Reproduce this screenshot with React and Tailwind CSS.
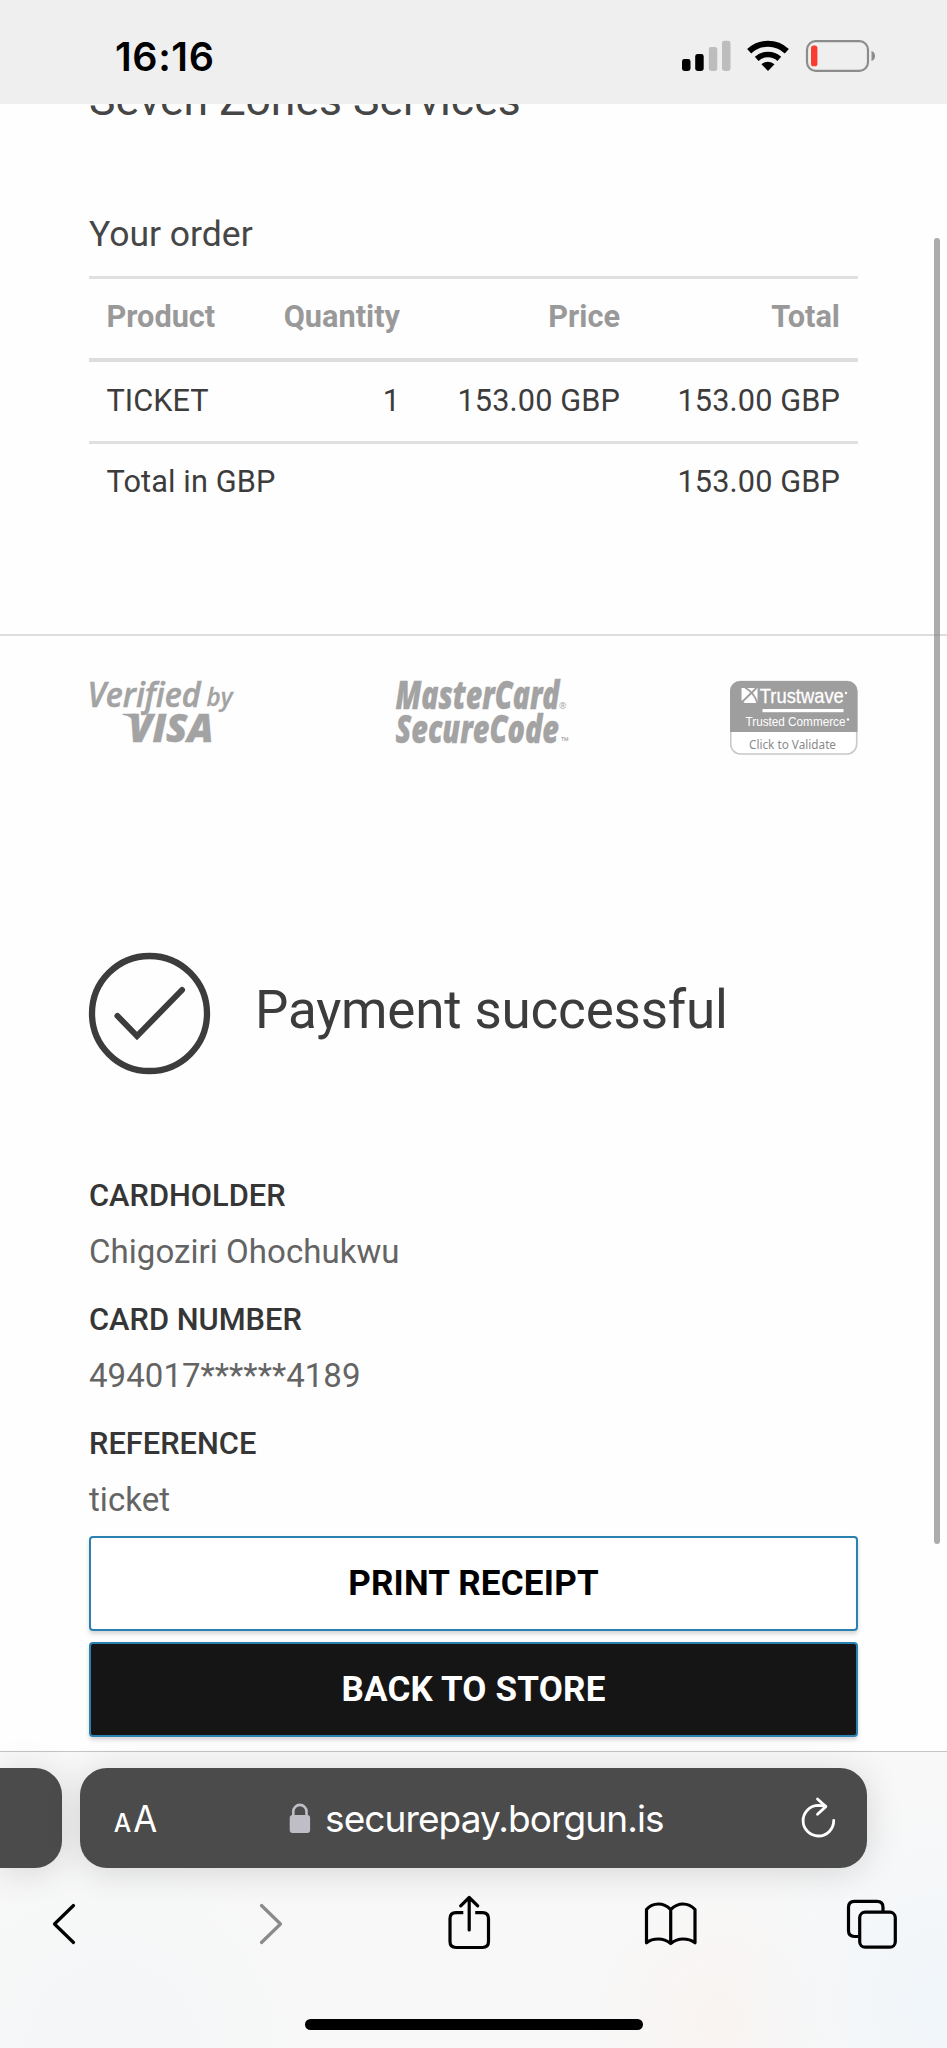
function StatusBar() {
  return (
    <header className="flex h-[104px] shrink-0 items-start justify-between bg-[#efefef] pl-[115px] pr-[70px]">
      <span className="mt-[33px] font-['Inter'] text-[39.5px] font-semibold leading-[48px] tracking-[0.6px] text-black">16:16</span>
      <svg className="mt-[36px]" width="195" height="40" viewBox="682 36 195 40">
        <rect x="682" y="59" width="8.5" height="12" rx="2.4" fill="#000" />
        <rect x="695.2" y="54" width="8.5" height="17" rx="2.4" fill="#000" />
        <rect x="708.8" y="47" width="8.5" height="24" rx="2.4" fill="#bdbdbd" />
        <rect x="722" y="40.7" width="8.5" height="30.3" rx="2.4" fill="#bdbdbd" />
        <path d="M749.2 51.2A27.5 27.5 0 0 1 786.8 51.2" fill="none" stroke="#000" strokeWidth="6" />
        <path d="M756.7 58.8A17 17 0 0 1 779.3 58.8" fill="none" stroke="#000" strokeWidth="5.6" />
        <path d="M761.5 64.3A9.6 9.6 0 0 1 774.5 64.3L768 71Z" fill="#000" />
        <rect x="807" y="41.2" width="61" height="29.6" rx="8.5" fill="none" stroke="#8c8c8c" strokeWidth="2.2" />
        <rect x="811" y="45.5" width="6.4" height="20.8" rx="2.6" fill="#fb3c30" />
        <path d="M871.5 51C876.3 52.5 876.3 59.5 871.5 61Z" fill="#8c8c8c" />
      </svg>
    </header>
  );
}

function OrderTable() {
  return (
    <div className="border-t-[3px] border-[#e0e0e0] text-[30.7px] leading-[36px] text-[#3c3c3c]">
      <div className="flex h-[83px] items-center border-b-4 border-[#dddddd] pb-[3px] font-bold text-[#999999]">
        <span className="w-[160px] pl-[17.5px]">Product</span>
        <span className="w-[151px] text-right">Quantity</span>
        <span className="w-[220px] text-right">Price</span>
        <span className="w-[220px] text-right">Total</span>
      </div>
      <div className="flex h-[82px] items-center border-b-[3px] border-[#e0e0e0] pb-[1px]">
        <span className="w-[160px] pl-[17.5px]">TICKET</span>
        <span className="w-[151px] text-right">1</span>
        <span className="w-[220px] text-right tracking-[0.12px]">153.00 GBP</span>
        <span className="w-[220px] text-right tracking-[0.12px]">153.00 GBP</span>
      </div>
      <div className="flex h-[76px] items-center justify-between pl-[17.5px] pr-[18px] tracking-[0.12px]">
        <span>Total in GBP</span>
        <span>153.00 GBP</span>
      </div>
    </div>
  );
}

function VerifiedByVisa() {
  return (
    <svg width="146" height="76" viewBox="89 680 146 76" className="overflow-visible font-['Open_Sans'] italic" fill="#a3a3a3" stroke="#a3a3a3">
      <text x="87.5" y="706.7" fontSize="34.5" fontWeight="600" strokeWidth="0.6" textLength="113" lengthAdjust="spacingAndGlyphs">Verified</text>
      <text x="206.5" y="706.3" fontSize="25" fontWeight="600" strokeWidth="0.3" textLength="26" lengthAdjust="spacingAndGlyphs">by</text>
      <text x="128.5" y="742" fontSize="39.5" fontWeight="800" strokeWidth="0.5" textLength="85" lengthAdjust="spacingAndGlyphs">VISA</text>
      <path stroke="none" d="M122.5 713.7H136L136 726Q133.500 716.5 122.5 714.8Z" />
    </svg>
  );
}

function SecureCode() {
  return (
    <svg width="178" height="76" viewBox="395 680 178 76" className="overflow-visible font-['Open_Sans'] italic" fill="#a3a3a3" stroke="#a3a3a3">
      <text x="396.5" y="708.5" fontSize="38.5" fontWeight="800" strokeWidth="0.4" textLength="164" lengthAdjust="spacingAndGlyphs">MasterCard</text>
      <text x="560" y="709" fontSize="9" stroke="none" className="not-italic">®</text>
      <text x="396.5" y="743" fontSize="38.5" fontWeight="800" strokeWidth="0.4" textLength="163.5" lengthAdjust="spacingAndGlyphs">SecureCode</text>
      <text x="562" y="745" fontSize="10.5" stroke="none" className="not-italic">™</text>
    </svg>
  );
}

function Trustwave() {
  return (
    <svg width="128" height="76" viewBox="730.5 680 128 76" className="font-['Liberation_Sans']">
      <rect x="731.2" y="681.5" width="126" height="72.5" rx="10" fill="#fff" stroke="#c8c8c8" strokeWidth="1.6" />
      <path d="M730.5 732V691a10 10 0 0 1 10-10H848a10 10 0 0 1 10 10V732Z" fill="#9e9e9e" />
      <path d="M742 688H758V703H742Z" fill="#fff" />
      <path d="M742 702.5L757 688M745.5 687.5Q755 693 758 703.5" stroke="#9e9e9e" strokeWidth="1.8" fill="none" />
      <path d="M741.5 703.5V700L746 703.5Z" fill="#9e9e9e" />
      <text x="760.3" y="703" fontSize="21" fill="#fff" stroke="#fff" strokeWidth="0.3" textLength="84" lengthAdjust="spacingAndGlyphs">Trustwave</text>
      <circle cx="846.5" cy="693" r="1.2" fill="#fff" />
      <rect x="763" y="709" width="81" height="3.2" fill="#fff" />
      <text x="746" y="725.5" fontSize="13" fill="#fff" textLength="100" lengthAdjust="spacingAndGlyphs">Trusted Commerce</text>
      <circle cx="848.5" cy="719.5" r="1.2" fill="#fff" />
      <text x="749.5" y="748.5" fontSize="12.5" fill="#8a8a8a" className="font-['Noto_Sans']" textLength="87" lengthAdjust="spacingAndGlyphs">Click to Validate</text>
    </svg>
  );
}

function Detail({ label, value }) {
  return (
    <div className="h-[124px]">
      <dt className="h-[57px] text-[30.8px] font-medium leading-[36px] text-[#363636]">{label}</dt>
      <dd className="-mt-[1px] text-[33px] leading-[36px] tracking-[0.05px] text-[#646464]">{value}</dd>
    </div>
  );
}

function BrowserBar() {
  return (
    <footer className="flex grow flex-col border-t border-[#c4c4c4] bg-[#f8f8f8] bg-[radial-gradient(circle_at_100%_85%,#f1f6fa_0%,#f8f8f800_22%),radial-gradient(circle_at_76%_90%,#f9f4f2_0%,#f8f8f800_18%),radial-gradient(circle_at_12%_100%,#f4f6f7_0%,#f8f8f800_25%)]">
      <div className="flex h-[116px] items-end gap-[18px] font-['Inter'] text-white">
        <div className="h-[100px] w-[62px] rounded-r-[27px] bg-[#4b4b4b] shadow-[0_4px_36px_rgba(0,0,0,0.14)]" />
        <div className="flex h-[100px] w-[787px] items-center rounded-[27px] bg-[#4b4b4b] pl-[34px] pr-[29px] shadow-[0_4px_36px_rgba(0,0,0,0.14)]">
          <svg className="mr-[129px] overflow-visible" width="46" height="40" viewBox="114 1798 46 40" fill="#fff">
            <text x="113.8" y="1832.3" fontSize="25.5" fontWeight="500" textLength="17.5" lengthAdjust="spacingAndGlyphs">A</text>
            <text x="133.3" y="1832.3" fontSize="36.5" textLength="24" lengthAdjust="spacingAndGlyphs">A</text>
          </svg>
          <svg className="mr-[14px]" width="22" height="32" viewBox="289 1802 22 32">
            <rect x="289.7" y="1815" width="20.4" height="18" rx="3" fill="#bfbec6" />
            <path d="M293.3 1816V1811.5A6.5 6.5 0 0 1 306.5 1811.5V1816" fill="none" stroke="#bfbec6" strokeWidth="2.6" />
          </svg>
          <span className="pt-[2px] text-[37px] leading-[46px] tracking-[-0.9px]">securepay.borgun.is</span>
          <svg className="ml-auto" width="38" height="44" viewBox="800 1796 38 44" fill="none" stroke="#fff" strokeWidth="2.8" strokeLinecap="round" strokeLinejoin="round">
            <path d="M833.7 1820.5A15.3 15.3 0 1 1 818.4 1805.4L825.5 1806.2" />
            <path d="M817.5 1799L825.8 1806.6L817.5 1814.3" />
          </svg>
        </div>
      </div>
      <nav className="flex items-center pl-[48px] pt-[23px]">
        <svg width="34" height="66" viewBox="48 1891 34 66" fill="none" stroke="#000" strokeWidth="3.2" strokeLinecap="round" strokeLinejoin="round">
          <path d="M73.5 1905.5L54.5 1924L73.5 1942.5" />
        </svg>
        <svg className="ml-[172px]" width="34" height="66" viewBox="254 1891 34 66" fill="none" stroke="#8a8a8a" strokeWidth="3.2" strokeLinecap="round" strokeLinejoin="round">
          <path d="M261.5 1905.5L280.5 1924L261.5 1942.5" />
        </svg>
        <svg className="ml-[158px]" width="46" height="66" viewBox="446 1891 46 66" fill="none" stroke="#000" strokeWidth="3.2" strokeLinecap="round" strokeLinejoin="round">
          <path strokeLinecap="butt" d="M463.3 1912.6H456Q450 1912.6 450 1918.6V1941.5Q450 1947.5 456 1947.5H482.5Q488.5 1947.5 488.5 1941.5V1918.6Q488.5 1912.6 482.5 1912.6H475.2" />
          <path d="M469.2 1930V1898M460.7 1905.8L469.2 1897.5L477.7 1905.8" />
        </svg>
        <svg className="ml-[151px]" width="56" height="66" viewBox="643 1891 56 66" fill="none" stroke="#000" strokeWidth="3.2" strokeLinecap="round" strokeLinejoin="round">
          <path d="M670.7 1943.5V1909.5Q665 1904 658.5 1904Q651 1904 646.5 1909.5V1942.8Q651 1939 658.5 1939Q665 1939 670.7 1943.5Q676.5 1939 683 1939Q690 1939 695 1942.8V1909.5Q690 1904 683 1904Q676.5 1904 670.7 1909.5" />
        </svg>
        <svg className="ml-[147px]" width="53" height="66" viewBox="846 1891 53 66" fill="none" stroke="#000" strokeWidth="3.2">
          <path d="M858.5 1936.5H854.5Q848.5 1936.5 848.5 1930.5V1907.3Q848.5 1901.3 854.5 1901.3H877Q883 1901.3 883 1907.3V1911" />
          <rect x="859.7" y="1912.2" width="35.6" height="35" rx="5.5" />
        </svg>
      </nav>
      <div className="mb-[18px] ml-[305px] mt-auto h-[11px] w-[338px] rounded-full bg-black" />
    </footer>
  );
}

export default function App() {
  return (
    <div className="relative flex h-[2048px] w-[947px] flex-col overflow-hidden bg-[#fefefe] font-['Roboto',sans-serif]">
      <StatusBar />
      <main className="flex flex-col">
        <div className="h-[532px] overflow-hidden border-b-2 border-[#dddddd] px-[89px]">
          <h1 className="-mt-[32px] text-[44.5px] leading-[56px] text-[#464646]">Seven Zones Services</h1>
          <h2 className="mt-[84px] h-[64px] text-[35.5px] leading-[44px] text-[#464646]">Your order</h2>
          <OrderTable />
        </div>
        <div className="flex justify-between px-[89px] pt-[44px]">
          <VerifiedByVisa />
          <SecureCode />
          <Trustwave />
        </div>
        <div className="mt-[196px] flex items-center px-[88px]">
          <svg width="124" height="124" viewBox="88 952 124 124" fill="none" stroke="#3c3c3c">
            <circle cx="149.5" cy="1013.5" r="57.5" strokeWidth="6.3" />
            <path d="M117.5 1016L137 1036L182 990" strokeWidth="6" strokeLinecap="round" strokeLinejoin="miter" />
          </svg>
          <h2 className="mb-[8px] ml-[43px] text-[53px] leading-[64px] tracking-[-0.2px] text-[#3c3c3c]">Payment successful</h2>
        </div>
        <dl className="mt-[102px] h-[358px] pl-[89px]">
          <Detail label="CARDHOLDER" value="Chigoziri Ohochukwu" />
          <Detail label="CARD NUMBER" value="494017******4189" />
          <Detail label="REFERENCE" value="ticket" />
        </dl>
        <div className="flex h-[215px] flex-col gap-[11px] px-[89px]">
          <button className="h-[95px] rounded-[4px] border-2 border-[#2a81b0] bg-white pt-[2px] text-[35px] font-bold tracking-[0.2px] text-black shadow-[0_3px_4px_rgba(0,0,30,0.16)]">PRINT RECEIPT</button>
          <button className="h-[95px] rounded-[4px] border-2 border-[#2a81b0] bg-[#151515] pt-[2px] text-[35px] font-bold tracking-[0.2px] text-white shadow-[0_3px_4px_rgba(0,0,30,0.16)]">BACK TO STORE</button>
        </div>
      </main>
      <BrowserBar />
      <div className="absolute left-[934px] top-[238px] h-[1306px] w-[6px] rounded-full bg-[#808080]/65" />
    </div>
  );
}
